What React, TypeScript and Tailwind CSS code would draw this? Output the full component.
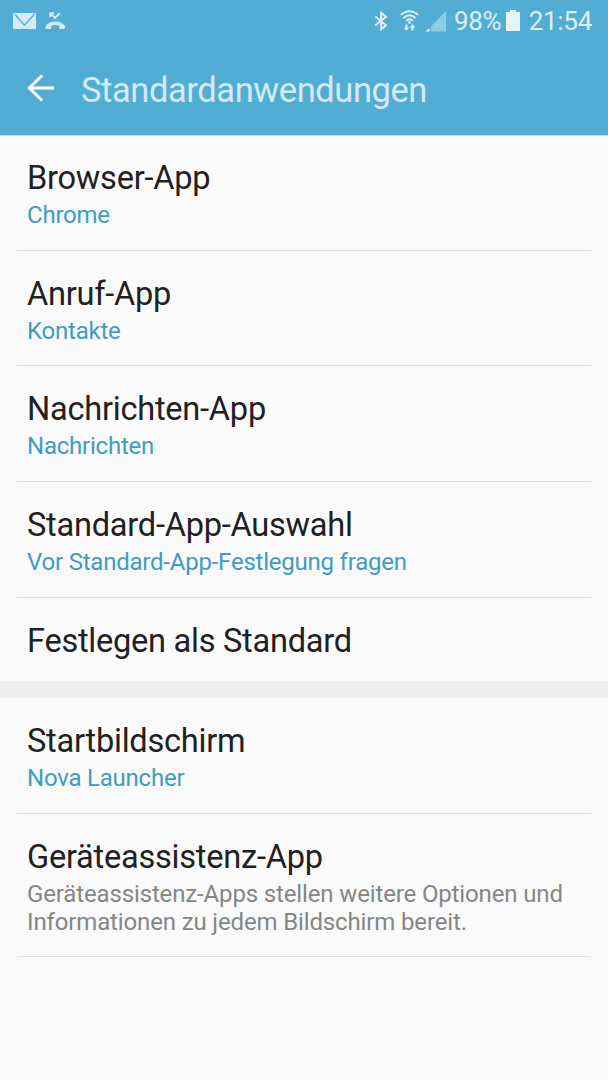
import React from 'react';

interface Setting {
  title: string;
  summary?: string;
  muted?: boolean;
}

const appSettings: Setting[] = [
  { title: 'Browser-App', summary: 'Chrome' },
  { title: 'Anruf-App', summary: 'Kontakte' },
  { title: 'Nachrichten-App', summary: 'Nachrichten' },
  { title: 'Standard-App-Auswahl', summary: 'Vor Standard-App-Festlegung fragen' },
];

const deviceSettings: Setting[] = [
  { title: 'Startbildschirm', summary: 'Nova Launcher' },
  {
    title: 'Geräteassistenz-App',
    summary: 'Geräteassistenz-Apps stellen weitere Optionen und Informationen zu jedem Bildschirm bereit.',
    muted: true,
  },
];

const MailIcon = () => (
  <svg width="23" height="16" viewBox="0 0 23 16">
    <rect width="23" height="16" rx="1" fill="#d4eaf4" />
    <path d="M1.8 1.2 11.5 12.2 21.2 1.2" fill="none" stroke="#52add4" strokeWidth="1.3" />
  </svg>
);

const MissedCallIcon = () => (
  <svg width="21" height="18" viewBox="0 0 21 18">
    <path d="M5.2 1.2 10 6 14.8 1.2M5.2 5V1.2H9" fill="none" stroke="#d4eaf4" strokeWidth="1.8" />
    <path
      d="M.3 14.4Q4 9.6 10.3 9.6T20.3 14.4L19.8 17H14.6L14.2 13.8Q10.3 12.4 6.4 13.8L6 17H.8Z"
      fill="#d4eaf4"
    />
  </svg>
);

const BluetoothIcon = () => (
  <svg width="14" height="20" viewBox="0 0 14 20">
    <path d="M1.2 5.4 12 14.3 7.2 18.2V1.8L12 5.7 1.2 14.6" fill="none" stroke="#e0f0f7" strokeWidth="2" />
  </svg>
);

const WifiIcon = () => (
  <svg width="19" height="22" viewBox="0 0 19 22">
    <g fill="none" stroke="#e0f0f7" strokeWidth="1.9">
      <path d="M.8 4.9Q9.5-2.5 18.2 4.9" />
      <path d="M3.6 8Q9.5 2.6 15.4 8" />
      <path d="M6.2 10.8Q9.5 7.8 12.8 10.8" />
    </g>
    <circle cx="9.5" cy="12.4" r="1.3" fill="#e0f0f7" />
    <path
      d="M5.4 14.5H7.4V17.4H9.2L6.4 21 3.6 17.4H5.4ZM11.4 20.6H13.4V17.7H15.2L12.4 14.1 9.6 17.7H11.4Z"
      fill="#e0f0f7"
    />
  </svg>
);

const SignalIcon = () => (
  <svg width="20" height="21" viewBox="0 0 20 21">
    <path d="M20 0V20.5H0Z" fill="#91cae3" />
    <path d="M0 20.5 3.5 17V20.5Z" fill="#fff" />
    <path d="M4.2 15V21" stroke="#52add4" strokeWidth="1.4" />
  </svg>
);

const BatteryIcon = () => (
  <svg width="14" height="21" viewBox="0 0 14 21">
    <path d="M4 0H10V2H14V21H0V2H4Z" fill="#e8f3f8" />
  </svg>
);

const BackIcon = () => (
  <svg width="28" height="28" viewBox="0 0 28 28">
    <path d="M15 1.5 2.4 14 15 26.5M2 14H27" fill="none" stroke="#fff" strokeWidth="3" />
  </svg>
);

const SettingRow: React.FC<Setting> = ({ title, summary, muted }) => (
  <li className="mx-[17px] border-b border-[#dedfdf] px-[10px] pt-[24.1px] pb-[20.6px]">
    <h2 className="text-[32.6px] leading-[38px] tracking-[-0.25px] text-[#212121]">{title}</h2>
    {summary && (
      <p
        className={`mt-1 text-[24px] leading-[28px] ${
          muted ? 'tracking-[-0.14px] text-[#858686]' : 'tracking-[-0.22px] text-[#3e9dc1]'
        }`}
      >
        {summary}
      </p>
    )}
  </li>
);

export default function App() {
  return (
    <div className="h-[1080px] w-[608px] overflow-hidden bg-[#fafafa] font-[Roboto,sans-serif]">
      <header className="h-[136px] border-b border-[#c9d6db] bg-[#52add4]">
        <div className="flex h-[42px] items-center justify-between pr-[16px] pl-[13px]">
          <div className="flex items-center gap-[9px]">
            <MailIcon />
            <MissedCallIcon />
          </div>
          <div className="flex items-center text-[26px] leading-[41px] tracking-[-0.3px] text-[#dceef6]">
            <BluetoothIcon />
            <div className="ml-[12px]"><WifiIcon /></div>
            <div className="ml-[7px]"><SignalIcon /></div>
            <span className="ml-[8px] pt-px">98%</span>
            <div className="mb-px ml-[5px]"><BatteryIcon /></div>
            <span className="ml-[8.5px] pt-px">21:54</span>
          </div>
        </div>
        <div className="flex h-[92px] items-center pl-[27px]">
          <BackIcon />
          <h1 className="ml-[26px] pt-[3px] text-[34.5px] leading-[40px] tracking-[-0.42px] text-[#d4eaf4]">
            Standardanwendungen
          </h1>
        </div>
      </header>

      <ul className="-mt-px">
        {appSettings.map((s) => <SettingRow key={s.title} {...s} />)}
        <li className="h-[83.2px] px-[27px] pt-[24.1px]">
          <h2 className="text-[32.6px] leading-[38px] tracking-[-0.27px] text-[#212121]">Festlegen als Standard</h2>
        </li>
      </ul>

      <div className="h-[17px] bg-[#eef0f0]" />

      <ul>
        {deviceSettings.map((s) => <SettingRow key={s.title} {...s} />)}
      </ul>
    </div>
  );
}
